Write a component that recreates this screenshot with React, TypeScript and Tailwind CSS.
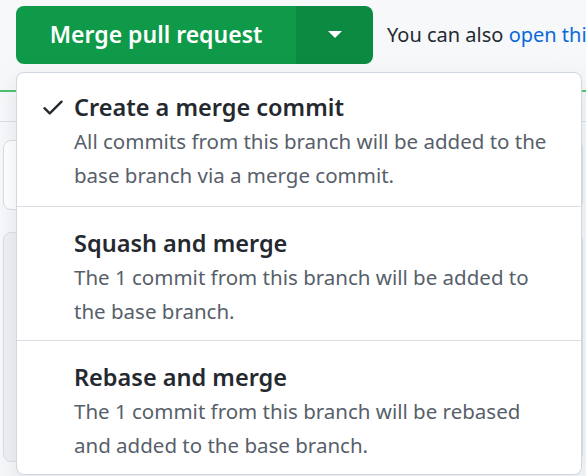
import React from "react";

const font = { fontFamily: '"Noto Sans", "Open Sans", sans-serif' };

function Check() {
  return (
    <svg width="26" height="26" viewBox="0 0 16 16" fill="#24292f">
      <path d="M13.78 4.22a.75.75 0 0 1 0 1.06l-7.25 7.25a.75.75 0 0 1-1.06 0L2.22 9.28a.751.751 0 0 1 .018-1.042.751.751 0 0 1 1.042-.018L6 10.94l6.72-6.72a.75.75 0 0 1 1.06 0Z" />
    </svg>
  );
}

function Item({
  checked,
  title,
  lines,
  last,
  first,
}: {
  checked?: boolean;
  title: string;
  lines: string[];
  last?: boolean;
  first?: boolean;
}) {
  return (
    <div
      className={`flex h-[134px] ${first ? "pt-[17px]" : "pt-[19px]"} ${last ? "" : "border-b border-[#d8dee4]"}`}
    >
      <div className="w-[57px] shrink-0 flex justify-end pr-[8px] pt-[4px]">{checked ? <Check /> : null}</div>
      <div className="flex flex-col">
        <div className="text-[23.5px] leading-[34px] font-semibold text-[#24292f] whitespace-nowrap">{title}</div>
        {lines.map((l) => (
          <div key={l} className="text-[20.5px] leading-[34px] text-[#57606a] whitespace-nowrap">
            {l}
          </div>
        ))}
      </div>
    </div>
  );
}

export default function App() {
  return (
    <div className="relative w-[586px] h-[476px] overflow-hidden bg-[#f6f8fa]" style={font}>
      <div className="flex items-center h-[68px] pl-[16px] pt-[1px]">
        <div className="flex shrink-0 h-[58px] rounded-[8px] overflow-hidden">
          <div className="w-[281px] bg-[#0e9a48] flex items-center justify-center text-white text-[23px] font-semibold border-r border-[#0b8a3e] whitespace-nowrap">
            Merge pull request
          </div>
          <div className="w-[76px] bg-[#0c8a41] flex items-center justify-center">
            <svg width="14" height="8" viewBox="0 0 14 8">
              <path d="M0 0 L14 0 L7 7 Z" fill="white" />
            </svg>
          </div>
        </div>
        <div className="ml-[14px] text-[20px] text-[#24292f] whitespace-nowrap">
          You can also <span className="text-[#0969da]">open this in GitHub Desktop</span>
        </div>
      </div>
      <div className="flex flex-col">
        <div className="h-[24px] border-b-2 border-[#4ac26b]"></div>
        <div className="h-[30px] bg-[#f6f8fa] border-b border-[#d8dee4]"></div>
        <div className="mt-[18px] ml-[3px] mr-[3px] h-[70px] bg-white border border-[#d8dee4] rounded-[8px]"></div>
        <div className="mt-[22px] ml-[3px] mr-[3px] h-[230px] bg-[#eef1f4] border border-[#d8dee4] rounded-[8px]"></div>
      </div>
      <div className="absolute left-[16px] top-[72px] w-[566px] h-[403px] bg-white border border-[#d0d7de] rounded-[8px] shadow-[0_8px_24px_rgba(140,149,159,0.2)] overflow-hidden">
        <Item
          first
          checked
          title="Create a merge commit"
          lines={["All commits from this branch will be added to the", "base branch via a merge commit."]}
        />
        <Item
          title="Squash and merge"
          lines={["The 1 commit from this branch will be added to", "the base branch."]}
        />
        <Item
          last
          title="Rebase and merge"
          lines={["The 1 commit from this branch will be rebased", "and added to the base branch."]}
        />
      </div>
    </div>
  );
}
